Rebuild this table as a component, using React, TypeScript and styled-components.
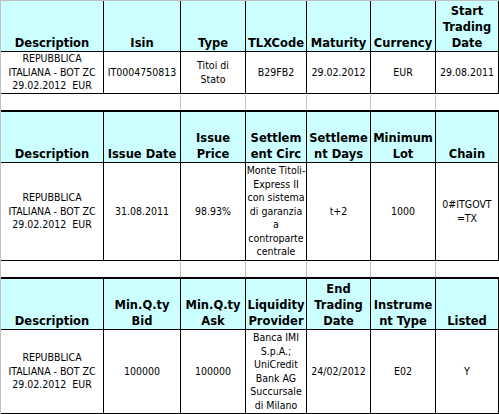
import React from "react";
import styled, { createGlobalStyle } from "styled-components";

const Global = createGlobalStyle`
  html, body { margin: 0; padding: 0; background: #ffffff; }
  * { box-sizing: border-box; }
`;

const COLS = "103px 77px 65px 61px 64px 65px 63px";

const Sheet = styled.div`
  width: 499px;
  height: 414px;
  overflow: hidden;
  border-left: 1px solid #c0c0c0;
  border-top: 1px solid #c0c0c0;
  display: flex;
  flex-direction: column;
  background: #ffffff;
`;

const Block = styled.section<{ $thick?: boolean }>`
  display: flex;
  flex-direction: column;
  border-top: ${(p) => (p.$thick ? "2px solid #000" : "none")};
`;

const Row = styled.div<{ $h: number; $head?: boolean }>`
  display: grid;
  grid-template-columns: ${COLS};
  height: ${(p) => p.$h}px;
  border-bottom: 1px solid #000;
  background: ${(p) => (p.$head ? "#ccffff" : "#ffffff")};
`;

const HeadCell = styled.div`
  border-right: 1px solid #000;
  display: flex;
  flex-direction: column;
  justify-content: flex-end;
  align-items: center;
  overflow: hidden;
  font-family: "DejaVu Sans", Verdana, sans-serif;
  font-weight: bold;
  font-size: 11.5px;
  line-height: 16px;
  color: #000;
  white-space: nowrap;
`;

const DataCell = styled.div`
  border-right: 1px solid #000;
  display: flex;
  flex-direction: column;
  justify-content: center;
  align-items: center;
  overflow: hidden;
  font-family: "DejaVu Sans Condensed", "DejaVu Sans", sans-serif;
  font-stretch: condensed;
  font-size: 10.5px;
  line-height: 13.5px;
  color: #000;
  white-space: pre;
`;

const Spacer = styled.div`
  display: grid;
  grid-template-columns: ${COLS};
  height: 16px;
`;

const GapCell = styled.div<{ $line?: boolean }>`
  border-right: 1px solid ${(p) => (p.$line ? "#c0c0c0" : "transparent")};
`;

const Line = styled.span`
  display: block;
  text-align: center;
`;

type Cell = string[];

const desc: Cell = ["REPUBBLICA", "ITALIANA - BOT ZC", "29.02.2012  EUR"];

const tables: { head: Cell[]; data: Cell[]; h: number }[] = [
  {
    head: [["Description"], ["Isin"], ["Type"], ["TLXCode"], ["Maturity"], ["Currency"], ["Start", "Trading", "Date"]],
    data: [desc, ["IT0004750813"], ["Titoi di", "Stato"], ["B29FB2"], ["29.02.2012"], ["EUR"], ["29.08.2011"]],
    h: 42,
  },
  {
    head: [["Description"], ["Issue Date"], ["Issue", "Price"], ["Settlem", "ent Circ"], ["Settleme", "nt Days"], ["Minimum", "Lot"], ["Chain"]],
    data: [
      desc,
      ["31.08.2011"],
      ["98.93%"],
      ["Monte Titoli-", "Express II", "con sistema", "di garanzia", "a", "controparte", "centrale"],
      ["t+2"],
      ["1000"],
      ["0#ITGOVT", "=TX"],
    ],
    h: 98,
  },
  {
    head: [["Description"], ["Min.Q.ty", "Bid"], ["Min.Q.ty", "Ask"], ["Liquidity", "Provider"], ["End", "Trading", "Date"], ["Instrume", "nt Type"], ["Listed"]],
    data: [
      desc,
      ["100000"],
      ["100000"],
      ["Banca IMI", "S.p.A.;", "UniCredit", "Bank AG", "Succursale", "di Milano"],
      ["24/02/2012"],
      ["E02"],
      ["Y"],
    ],
    h: 84,
  },
];

const Gap = () => (
  <Spacer>
    {[false, true, true, true, true, true, false].map((l, i) => (
      <GapCell key={i} $line={l} />
    ))}
  </Spacer>
);

export default function App() {
  return (
    <>
      <Global />
      <Sheet>
        {tables.map((t, ti) => (
          <React.Fragment key={ti}>
            {ti > 0 && <Gap />}
            <Block $thick={ti > 0}>
              <Row $h={51} $head>
                {t.head.map((c, i) => (
                  <HeadCell key={i}>
                    {c.map((l, j) => (
                      <Line key={j}>{l}</Line>
                    ))}
                  </HeadCell>
                ))}
              </Row>
              <Row $h={t.h}>
                {t.data.map((c, i) => (
                  <DataCell key={i}>
                    {c.map((l, j) => (
                      <Line key={j}>{l}</Line>
                    ))}
                  </DataCell>
                ))}
              </Row>
            </Block>
          </React.Fragment>
        ))}
      </Sheet>
    </>
  );
}
